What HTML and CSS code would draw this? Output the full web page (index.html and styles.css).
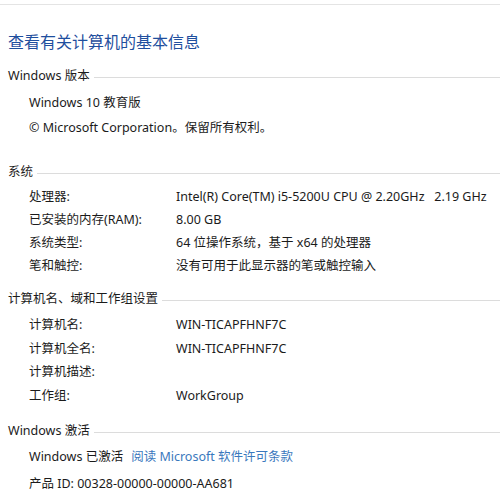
FILE: index.html
```html
<!DOCTYPE html>
<html lang="zh-CN">
<head>
<meta charset="utf-8">
<link rel="stylesheet" href="styles.css">
</head>
<body>
<div class="topline"></div>
<div class="page">
  <h1 class="title">查看有关计算机的基本信息</h1>

  <div class="head head-1"><span>Windows 版本</span></div>
  <div class="group group-1">
    <div class="line">Windows 10 教育版</div>
    <div class="line">© Microsoft Corporation。保留所有权利。</div>
  </div>

  <div class="head head-2"><span>系统</span></div>
  <div class="group group-2">
    <div class="row"><span class="label">处理器:</span><span class="value">Intel(R) Core(TM) i5-5200U CPU @ 2.20GHz&nbsp;&nbsp;&nbsp;2.19 GHz</span></div>
    <div class="row"><span class="label">已安装的内存(RAM):</span><span class="value">8.00 GB</span></div>
    <div class="row"><span class="label">系统类型:</span><span class="value">64 位操作系统，基于 x64 的处理器</span></div>
    <div class="row"><span class="label">笔和触控:</span><span class="value">没有可用于此显示器的笔或触控输入</span></div>
  </div>

  <div class="head head-3"><span>计算机名、域和工作组设置</span></div>
  <div class="group group-3">
    <div class="row"><span class="label">计算机名:</span><span class="value">WIN-TICAPFHNF7C</span></div>
    <div class="row"><span class="label">计算机全名:</span><span class="value">WIN-TICAPFHNF7C</span></div>
    <div class="row"><span class="label">计算机描述:</span><span class="value"></span></div>
    <div class="row"><span class="label">工作组:</span><span class="value">WorkGroup</span></div>
  </div>

  <div class="head head-4"><span>Windows 激活</span></div>
  <div class="group group-4">
    <div class="line">Windows 已激活<a class="link" href="#">阅读 Microsoft 软件许可条款</a></div>
    <div class="line product">产品 ID: 00328-00000-00000-AA681</div>
  </div>
</div>
</body>
</html>
```

FILE: styles.css
```css
html, body {
  margin: 0;
  padding: 0;
  background: #ffffff;
}
body {
  font-family: "Noto Sans", "Noto Sans CJK SC", sans-serif;
  font-size: 12.5px;
  color: #1b1b1b;
  overflow: hidden;
}
.topline {
  height: 4px;
  border-bottom: 1px solid #e4e4e4;
}
.page {
  padding-left: 8px;
}
.title {
  margin: 26px 0 0 0;
  height: 22px;
  line-height: 22px;
  font-size: 16px;
  font-weight: normal;
  color: #1f4f9e;
}
.head {
  display: flex;
  align-items: center;
  height: 20px;
  line-height: 20px;
  font-size: 12.5px;
}
.head::after {
  content: "";
  flex: 1;
  border-top: 1px solid #dcdcdc;
  margin-left: 4px;
  margin-top: 3px;
}
.head-1 { margin-top: 13px; }
.head-2 { margin-top: 22px; }
.head-3 { margin-top: 12px; }
.head-4 { margin-top: 14px; }

.group {
  padding-left: 21px;
}
.group-1 { padding-top: 4px; }
.group-1 .line { height: 25px; line-height: 25px; }
.group-2 { padding-top: 3px; }
.group-2 .row { height: 23px; line-height: 23px; }
.group-3 { padding-top: 4px; }
.group-3 .row { height: 23.5px; line-height: 23.5px; }
.group-4 { padding-top: 4px; }
.group-4 .line { height: 23px; line-height: 23px; }
.group-4 .product { margin-top: 4px; }

.row {
  display: grid;
  grid-template-columns: 147px 1fr;
  white-space: nowrap;
}
.line {
  white-space: nowrap;
}
.link {
  color: #3a78bd;
  text-decoration: none;
  margin-left: 8px;
}
```
